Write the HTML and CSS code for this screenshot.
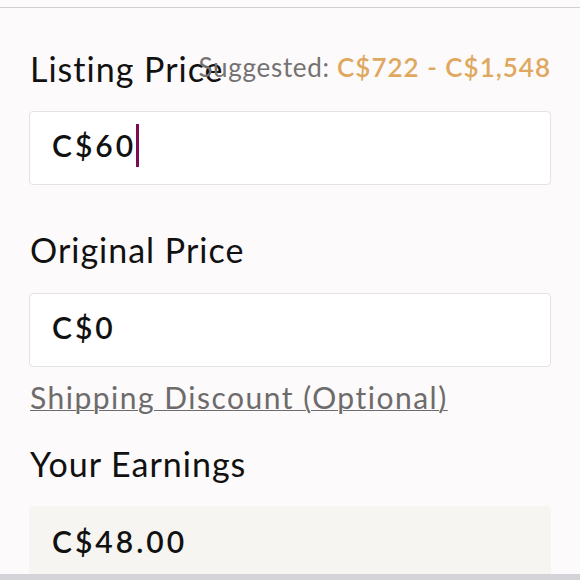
FILE: index.html
```html
<!doctype html>
<html>
  <head>
    <title>Price</title>
    <link rel="stylesheet" href="styles.css">
  </head>
  <body>
    <div class="page">
      <div class="topline"></div>
      <form class="pricing">
        <div class="label-row">
          <label class="label label-listing">Listing Price</label>
          <span class="suggested">Suggested: <b>C$722 - C$1,548</b></span>
        </div>
        <div class="field">
          <span class="value">C$60</span><span class="caret"></span>
        </div>

        <label class="label label-original">Original Price</label>
        <div class="field">
          <span class="value">C$0</span>
        </div>

        <a class="discount" href="#">Shipping Discount (Optional)</a>

        <label class="label label-earnings">Your Earnings</label>
        <div class="field earnings">
          <span class="value">C$48.00</span>
        </div>
      </form>
      <div class="bottombar"></div>
    </div>
  </body>
</html>
```

FILE: styles.css
```css
* { margin: 0; padding: 0; box-sizing: border-box; }
body { background: #fcfafa; font-family: Lato, "Open Sans", sans-serif; color: #111; }

.page {
  height: 580px;
  display: flex;
  flex-direction: column;
  overflow: hidden;
}

.topline {
  height: 8px;
  border-bottom: 1px solid #d2d0d0;
  flex: none;
}

.pricing {
  flex: 1;
  overflow: hidden;
  display: flex;
  flex-direction: column;
  padding: 41px 29px 0 29px;
}

.label {
  display: block;
  font-size: 34px;
  line-height: 40px;
  letter-spacing: 1px;
  white-space: nowrap;
  padding-left: 1px;
}

.label-row {
  display: flex;
  align-items: flex-start;
  height: 40px;
}

/* the label runs under the suggestion, as in the app */
.label-listing { flex: 0 0 166px; min-width: 0; }

.suggested {
  margin-left: auto;
  margin-top: 3px;
  font-size: 26px;
  line-height: 30px;
  letter-spacing: 0.7px;
  white-space: nowrap;
  color: #747272;
}

.suggested b {
  color: #dfa85e;
  font-weight: 600;
  letter-spacing: 1px;
}

.field {
  margin-top: 22px;
  height: 74px;
  flex: none;
  background: #fff;
  border: 1px solid #e4e2e2;
  border-radius: 4px;
  display: flex;
  align-items: flex-start;
  padding: 15px 0 0 22px;
}

.value {
  font-size: 30px;
  line-height: 36px;
  font-weight: 600;
  letter-spacing: 3px;
}

.caret {
  width: 3px;
  height: 43px;
  margin: -3px 0 0 0;
  background: #7d0a55;
}

.label-original { margin-top: 45px; }
.label-original + .field { margin-top: 23px; }

.discount {
  margin-top: 12px;
  font-size: 30px;
  line-height: 36px;
  letter-spacing: 1.5px;
  color: #6d6b6b;
  padding-left: 1px;
  text-decoration: underline;
  text-decoration-thickness: 1px;
  align-self: flex-start;
}

.label-earnings { margin-top: 29px; }

.earnings {
  background: #f6f5f1;
  border-color: #f6f5f1;
  margin-top: 22px;
  height: 80px;
  padding-top: 16px;
}

.bottombar {
  height: 6px;
  flex: none;
  background: #d4d4d8;
}
```
